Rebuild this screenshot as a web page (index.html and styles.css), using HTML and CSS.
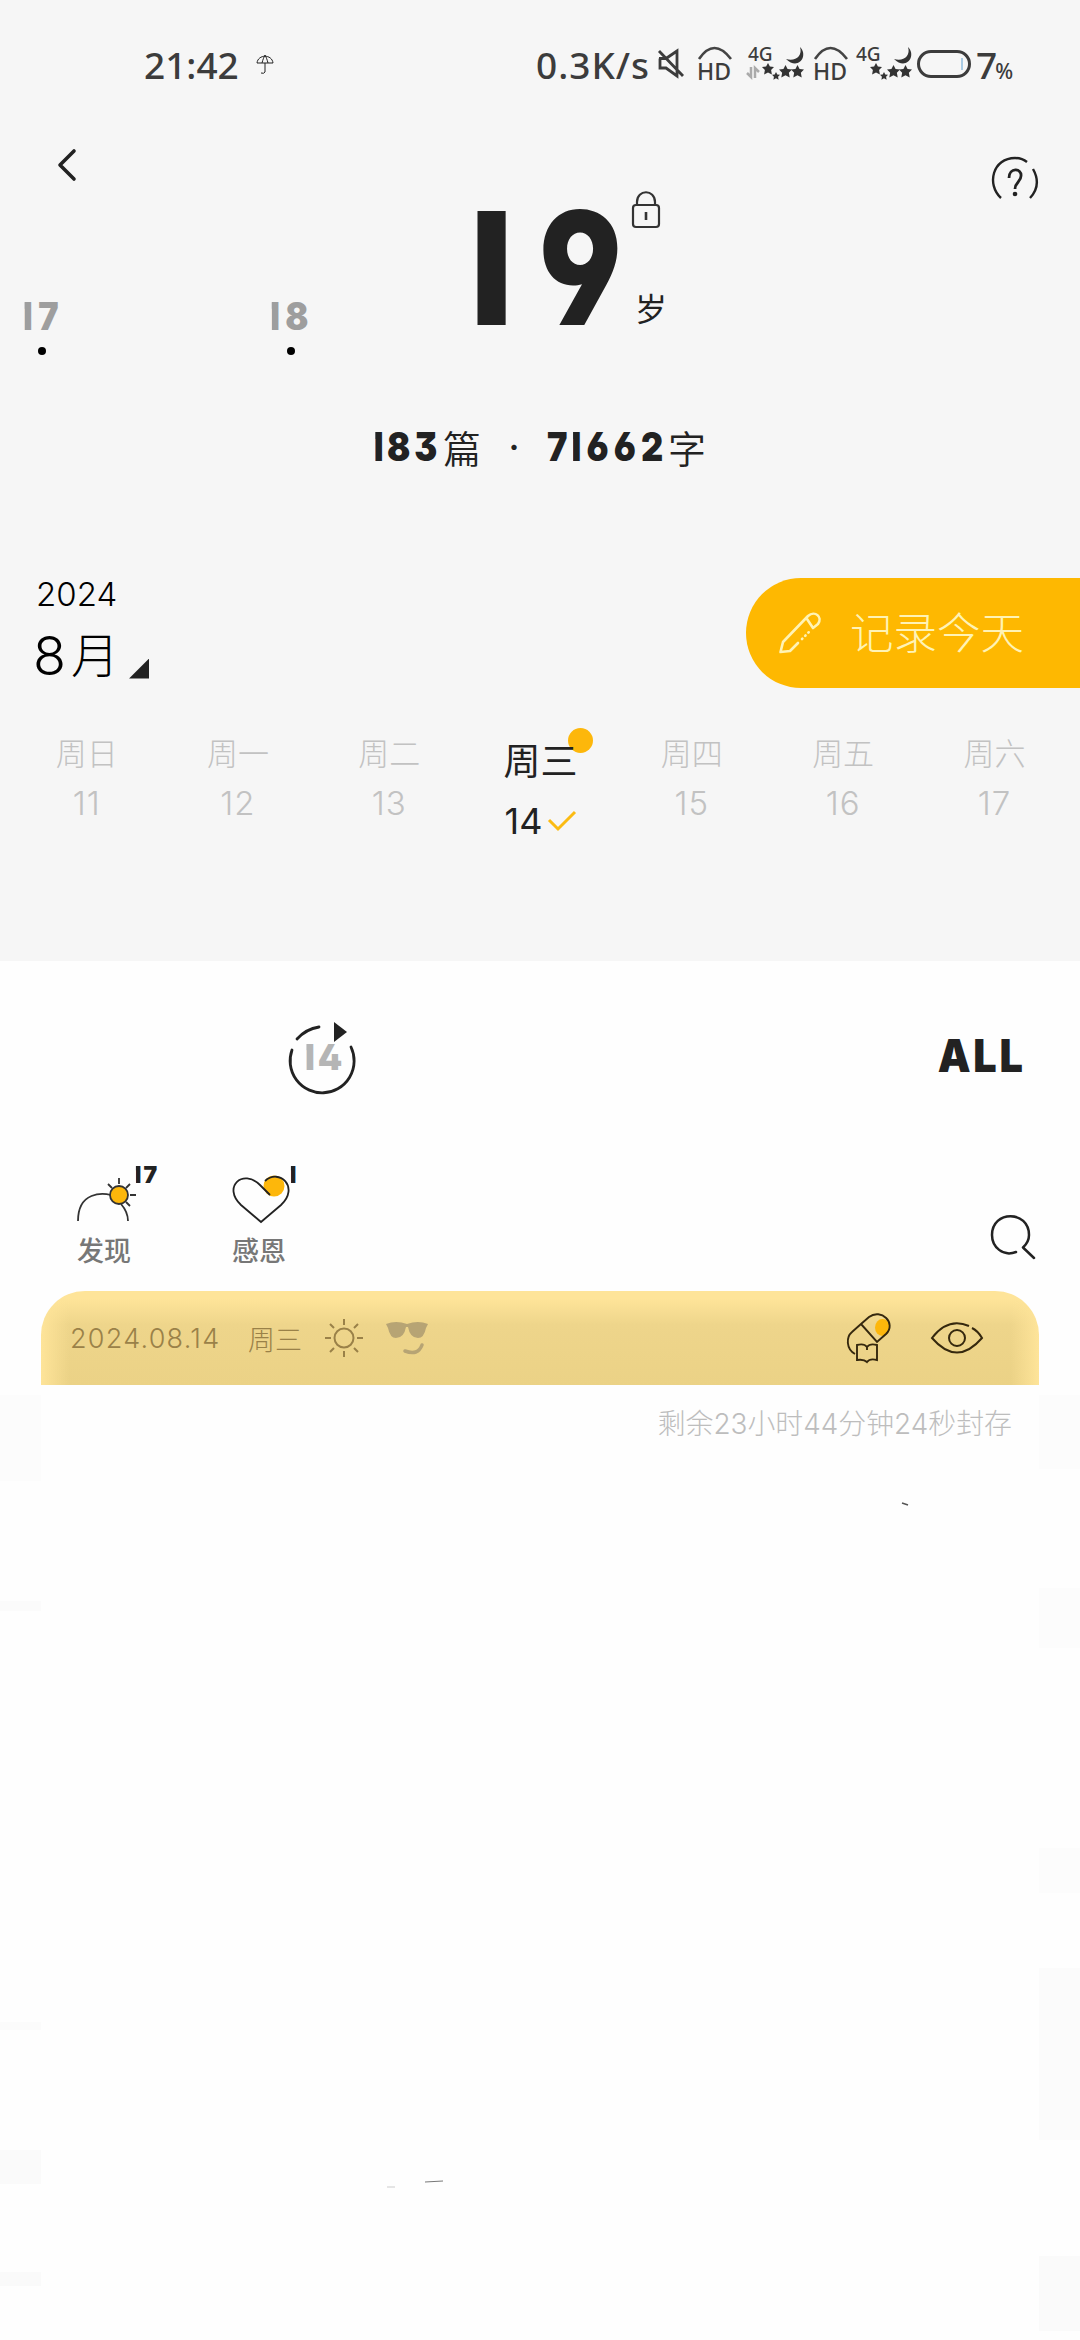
FILE: index.html
```html
<!DOCTYPE html>
<html lang="zh-CN">
<head>
<meta charset="utf-8">
<title>日记</title>
<link rel="stylesheet" href="styles.css">
</head>
<body>
<svg class="defs" width="0" height="0">
  <symbol id="hd" viewBox="0 0 36 36"><path d="M2 13Q17-9 34 13" fill="none" stroke="#444" stroke-width="2.6"/></symbol>
  <symbol id="star" viewBox="0 0 12 12"><path d="M6 0l1.900 3.600 4.100.5-2.900 3 .8 4.400L6 9.400l-3.900 2.100.8-4.400L0 4.100l4.100-.5z" fill="#333"/></symbol>
  <symbol id="signal" viewBox="0 0 60 36">
    <path d="M51 1C60 10 49 25 37 13C46 16 54 10 51 1Z" fill="#333"/>
    <use href="#star" x="13" y="17" width="12" height="12"/><use href="#star" x="23" y="26" width="8" height="8"/>
    <use href="#star" x="30" y="19" width="13" height="13"/><use href="#star" x="42" y="19" width="13" height="13"/>
  </symbol>
</svg>
<div class="screen">
  <section class="top">
    <header class="status">
      <span class="clock">21:42</span>
      <svg class="umbrella" viewBox="0 0 18 20" fill="none" stroke="#222" stroke-width="1"><path d="M1 9C2 0 16 0 17 9ZM6 9C7 5 8 3 9 1C10 3 11 5 12 9M9 9v9q-1 2-4 1"/></svg>
      <span class="speed">0.3K/s</span>
      <svg class="mute" viewBox="0 0 26 30" fill="none" stroke="#3c3c3c" stroke-width="2.800"><path d="M1 9.500H8L19 2V27L8 19H2V9.500M1 2L25 27"/></svg>
      <span class="hd"><svg viewBox="0 0 36 36"><use href="#hd"/></svg><b>HD</b></span>
      <span class="sig sig-data"><b>4G</b><svg viewBox="0 0 60 36"><use href="#signal"/><path d="M-2 27l4 4V21M6 32V22l4 4" fill="none" stroke="#aaa" stroke-width="2.500"/></svg></span>
      <span class="hd hd-two"><svg viewBox="0 0 36 36"><use href="#hd"/></svg><b>HD</b></span>
      <span class="sig sig-two"><b>4G</b><svg viewBox="0 0 60 36"><use href="#signal"/></svg></span>
      <span class="battery"><i></i></span>
      <span class="percent">7<small>%</small></span>
    </header>

    <nav class="nav">
      <svg class="back" viewBox="0 0 20 34" fill="none" stroke="#222" stroke-width="3.600" stroke-linecap="round" stroke-linejoin="round"><path d="M17 3L3 17L17 31"/></svg>
      <svg class="help" viewBox="0 0 48 44" fill="none" stroke="#222" stroke-width="2.400"><path d="M10 42C-5 28 2 2 24 2Q31 2 36 6M42 13Q51 29 39 42"/><path d="M18 22C18 11 31 12 30 20C30 26 24 26 24 33" stroke-width="2.800"/><circle cx="24" cy="38" r="2.300" fill="#222" stroke="none"/></svg>
    </nav>

    <div class="ages">
      <div class="age age-a"><span class="num"><i class="one">1</i>7</span><em></em></div>
      <div class="age age-b"><span class="num"><i class="one">1</i>8</span><em></em></div>
      <div class="current"><span class="num"><i class="one">1</i><i class="slim">9</i></span></div>
      <div class="unit">
        <svg viewBox="0 0 30 38" fill="none" stroke="#333" stroke-width="2.200"><rect x="2" y="14" width="26" height="22" rx="3"/><path d="M6 14V11C6-2 24-2 24 11V14"/><path d="M15 21v8" stroke-width="2.600"/></svg>
        <span>岁</span>
      </div>
    </div>

    <div class="totals"><span class="num n1"><i class="one">1</i>83</span><span class="cjk">篇</span><span class="sep">·</span><span class="num n2">7<i class="one">1</i>662</span><span class="cjk">字</span></div>

    <div class="month-row">
      <div class="month"><div class="year">2024</div><div class="mon">8<span>月</span><i></i></div></div>
      <div class="write">
        <svg viewBox="0 0 42 42" fill="none" stroke="#fff3b5" stroke-width="2.600" stroke-linejoin="round" stroke-linecap="round"><path d="M19 31L11 39L1.500 40L4 30L29 4C36-2 44 5 39 12L34 16L28 7"/><path d="M23 27l9-9" stroke-dasharray=".5 4"/></svg>
        <span>记录今天</span>
      </div>
    </div>

    <div class="week">
      <div class="day"><span>周日</span><b>11</b></div>
      <div class="day"><span>周一</span><b>12</b></div>
      <div class="day"><span>周二</span><b>13</b></div>
      <div class="day today"><i class="dot"></i><span>周三</span><b>14<svg viewBox="0 0 28 22" fill="none" stroke="#fbbb12" stroke-width="3"><path d="M1 10L10 19L27 2"/></svg></b></div>
      <div class="day"><span>周四</span><b>15</b></div>
      <div class="day"><span>周五</span><b>16</b></div>
      <div class="day"><span>周六</span><b>17</b></div>
    </div>
  </section>

  <section class="filters">
    <div class="replay">
      <svg viewBox="0 0 68 72" fill="none" stroke="#222" stroke-width="2.800" stroke-linecap="round"><path d="M9 17Q18 7 31 5M4 28A32 32 0 1 0 63 25"/><path d="M46 0V20L59 10Z" fill="#222" stroke="none"/></svg>
      <span class="num"><i class="one">1</i>4</span>
    </div>
    <div class="all">ALL</div>
  </section>

  <section class="tools">
    <div class="tool">
      <svg viewBox="0 0 62 48" fill="none" stroke="#333" stroke-width="1.800"><path d="M2 44C2 14 27 16 35 18M45 27Q52 35 52 44"/><circle cx="43" cy="18" r="9" fill="#fdb70b"/><path d="M43 1v6M32 7l4 4M54 7l-4 4M54 18h6M50 25l4 4"/></svg>
      <span class="count num"><i class="one">1</i>7</span><span class="label">发现</span>
    </div>
    <div class="tool">
      <svg viewBox="-2 0 62 48" fill="none" stroke="#222" stroke-width="1.800"><circle cx="41" cy="9" r="10.500" fill="#fdb70b" stroke="none"/><path d="M37 18L27 8C10-9-11 10 8 28L28 45L48 28C67 10 46-9 32 4"/></svg>
      <span class="count num"><i class="one">1</i></span><span class="label">感恩</span>
    </div>
    <svg class="search" viewBox="0 0 46 46" fill="none" stroke="#222" stroke-width="2.500" stroke-linecap="round" stroke-linejoin="round"><path d="M26 38C13 43 2 33 2 21C2-4 39-4 39 21Q39 28 33 33.500L44 44"/></svg>
  </section>

  <main class="feed">
    <div class="gutter gutter-left"></div>
    <article class="card">
      <header class="card-head">
        <span class="date">2024.08.14</span><span class="wd">周三</span>
        <svg class="sun" viewBox="0 0 38 38" fill="none" stroke="#9a8148" stroke-width="2"><circle cx="19" cy="19" r="9.500"/><path d="M19 0v6M19 32v6M0 19h6M32 19h6M5 5l4 4M29 29l4 4M33 5l-4 4M5 33l4-4"/></svg>
        <svg class="cool" viewBox="0 0 42 34"><path d="M0 3Q10-1 21 3Q32-1 42 3L40 7Q38 17 32 17Q24 17 22 6H20Q18 17 10 17Q4 17 2 7Z" fill="#b7a474"/><path d="M19 30Q32 35 36 24" fill="none" stroke="#b7a474" stroke-width="3.500" stroke-linecap="round"/></svg>
        <svg class="pill" viewBox="0 0 44 50" fill="none" stroke="#35280e" stroke-width="1.900"><ellipse cx="35.500" cy="14.500" rx="7.500" ry="8.500" fill="#fdb70b" stroke="none"/><path d="M8 41C-1 36-1 24 5 19L14 11L22 4C34-5 50 10 39 21L30 29L14 11M10 32Q17 30 20 34Q23 30 30 32V47Q23 45 20 49Q17 46 10 47ZM20 33v4"/></svg>
        <svg class="eye" viewBox="0 0 52 32" fill="none" stroke="#35280e" stroke-width="2"><path d="M38 4Q17-5 1 16Q26 45 51 16Q47 9 41 6"/><circle cx="26" cy="16" r="8"/></svg>
      </header>
      <div class="seal">剩余23小时44分钟24秒封存</div>
      <svg class="strokes" viewBox="0 0 600 800" fill="none"><path d="M479 35l6 2" stroke="#555" stroke-width="1.500"/><path d="M2 714l18-1" stroke="#777" stroke-width="1"/><path d="M-36 719h8" stroke="#ccc" stroke-width="1"/></svg>
    </article>
    <div class="gutter gutter-right"></div>
  </main>
</div>
</body>
</html>
```
FILE: styles.css
```css
* { box-sizing: border-box; }
body { margin: 0; background: #fefefe; font-family: Inter, "Noto Sans CJK SC", sans-serif; color: #222; }
svg { display: block; overflow: visible; flex: none; }
.defs { display: none; }
i, em { font-style: normal; }
.screen { width: 1080px; height: 2340px; overflow: hidden; background: #fefefe; }
.top { height: 961px; background: #f6f6f6; overflow: hidden; }
.num { font-family: Inter, sans-serif; font-weight: 900; font-feature-settings: "ss01", "cv03", "cv04"; white-space: nowrap; }
/* the numeral one is shown as its plain stem */
.one { display: inline-block; clip-path: inset(0 0 0 47%); letter-spacing: 0; }
.slim { display: inline-block; transform: scaleX(.82); }

.status { display: flex; height: 128px; align-items: center; padding-left: 144px; color: #3c3c3c; font-family: "Noto Sans", sans-serif; font-weight: 500; white-space: nowrap; }
.clock { width: 112px; font-size: 37px; letter-spacing: 0; }
.umbrella { width: 18px; height: 20px; }
.speed { width: 122px; margin-left: 262px; font-size: 37px; letter-spacing: 1px; }
.mute { width: 26px; height: 30px; }
.hd { position: relative; width: 36px; height: 36px; margin-left: 13px; }
.hd svg { width: 36px; height: 36px; }
.hd b { position: absolute; left: 0; top: 12px; font: 500 23px/26px "Noto Sans", sans-serif; }
.sig { position: relative; width: 60px; height: 36px; }
.sig svg { width: 60px; height: 36px; margin-left: 4px; }
.sig b { position: absolute; left: 3px; top: -3px; font: 500 19px/22px "Noto Sans", sans-serif; }
.sig-data { margin-left: 12px; }
.hd-two { margin-left: 8px; }
.sig-two { margin-left: 4px; }
.battery { display: flex; justify-content: flex-end; align-items: center; width: 54px; height: 28px; margin-left: 4px; padding-right: 5px; border: 3px solid #3c3c3c; border-radius: 14px; }
.battery i { width: 2px; height: 12px; background: #a9cbe4; }
.percent { font-size: 37px; margin-left: 5px; }
.percent small { margin-left: -2px; font-size: 21px; }

.nav { display: flex; justify-content: space-between; height: 72px; padding: 20px 41px 0 57px; }
.back { width: 20px; height: 34px; }
.help { width: 48px; height: 44px; margin-top: 8px; }

.ages { display: flex; height: 200px; }
.age { display: flex; flex-direction: column; align-items: center; color: #9e9e9e; font-size: 38px; line-height: 40px; padding-top: 96px; }
.age .num { margin-left: -9px; transform: scaleX(.9); }
.age .one { margin-right: 6px; }
.age-a { width: 84px; }
.age-b { width: 164px; margin-left: 125px; }
.age em { width: 8px; height: 8px; margin-top: 11px; border-radius: 50%; background: #000; }
.current { width: 157px; margin-left: 88px; font-size: 157px; line-height: 136px; }
.current .one { margin-left: -19px; margin-right: 17px; clip-path: inset(0 0 0 50%); }
.unit { margin-left: 13px; }
.unit svg { width: 30px; height: 38px; margin-top: -9px; }
.unit span { display: block; margin: 60px 0 0 4px; font-size: 32px; line-height: 42px; }

.totals { display: flex; align-items: center; height: 92px; padding-left: 375px; font-size: 40px; }
.totals .cjk { width: 38px; font-size: 38px; font-weight: 350; }
.totals .num { letter-spacing: 4.500px; transform: scaleX(.86); transform-origin: left; }
.totals .one { margin-right: 4px; }
.totals .n1 { width: 75px; margin-left: -7px; }
.totals .n2 { width: 121px; letter-spacing: 6px; }
.totals .n2 .one { margin-left: -8px; margin-right: 6px; }
.sep { width: 66px; text-align: center; }

.month-row { display: flex; justify-content: space-between; height: 236px; padding-top: 86px; }
.month { padding-left: 33px; font-weight: 300; color: #000; }
.year { padding-left: 3px; font-size: 33px; line-height: 32px; }
.mon { display: flex; align-items: center; font-size: 54px; line-height: 64px; margin-top: 14px; }
.mon span { margin-left: 5px; font-size: 48px; }
.mon i { width: 20px; height: 20px; margin: 25px 0 0 10px; background: #222; clip-path: polygon(100% 0, 100% 100%, 0 100%); }
.write { display: flex; align-items: center; width: 334px; height: 110px; padding-left: 33px; border-radius: 55px 0 0 55px; background: #feb801; color: #fff3b5; font-size: 43.500px; line-height: 60px; font-weight: 300; }
.write svg { width: 42px; height: 42px; margin-right: 29px; }
.write span { padding-bottom: 1px; }

.week { display: grid; grid-template-columns: repeat(7, 151.300px); padding-left: 11px; }
.day { position: relative; display: flex; flex-direction: column; align-items: center; color: #c2c2c2; font-weight: 300; }
.day span { font-size: 31px; line-height: 44px; margin-top: 4px; }
.day b { display: flex; align-items: center; font-size: 33px; line-height: 40px; margin-top: 7px; font-weight: 300; letter-spacing: 1px; }
.today { color: #222; }
.today span { position: relative; margin-top: 12px; font-size: 37px; font-weight: 400; }
.today b { margin-top: 17px; font-size: 36px; font-weight: 400; letter-spacing: 0; }
.today svg { width: 28px; height: 22px; margin-left: 6px; }
.dot { position: absolute; left: 103px; top: 0; width: 25px; height: 25px; border-radius: 50%; background: #fdb70b; }

.filters { display: flex; justify-content: space-between; height: 197px; padding: 61px 57px 0 288px; }
.replay { position: relative; width: 68px; height: 72px; }
.replay svg { width: 68px; height: 72px; }
.replay span { position: absolute; left: 11px; top: 15px; font-size: 35px; line-height: 40px; color: #b5b5b5; }
.replay .one { margin-right: 3px; }
.all { font: 900 45px/68px Inter, sans-serif; letter-spacing: 3px; margin-right: -3px; transform: scaleX(.92); transform-origin: right; }

.tools { display: flex; height: 133px; padding-left: 76px; }
.tool { position: relative; width: 155px; padding-top: 19px; }
.tool svg { width: 62px; height: 48px; }
.count { position: absolute; left: 55px; top: 5px; font-size: 23px; line-height: 24px; }
.count .one { margin-right: 2px; }
.label { display: block; margin: 8px 0 0 1px; font-size: 27px; line-height: 38px; color: #777; font-weight: 500; }
.search { width: 46px; height: 46px; margin: 56px 0 0 604px; }

.feed { display: grid; grid-template-columns: 41px 998px 41px; height: 1049px; }
.card-head { display: flex; align-items: center; height: 94px; padding-left: 29px; border-radius: 44px 44px 0 0; background: linear-gradient(90deg, #fee499, rgba(254, 228, 153, 0) 28px, rgba(254, 228, 153, 0) 970px, #fee499), linear-gradient(#fee499 8px, #eed58b 34px, #ebd286); color: #9a8148; font-size: 27px; font-weight: 300; }
.date { width: 178px; letter-spacing: 1.250px; }
.wd { width: 77px; }
.sun { width: 38px; height: 38px; }
.cool { width: 42px; height: 34px; margin-left: 23px; }
.pill { width: 44px; height: 50px; margin-left: 419px; }
.eye { width: 52px; height: 32px; margin-left: 40px; }
.seal { padding: 17px 27px 0 0; text-align: right; font-size: 27.900px; line-height: 44px; font-weight: 300; color: #bdbdbd; }
.strokes { width: 600px; height: 800px; margin: 22px 0 0 382px; }
.gutter-left { background: linear-gradient(#fefefe 104px, #fcfcfc 104px 190px, #fefefe 190px 310px, #fbfbfb 310px 320px, #fefefe 320px 731px, #fbfbfb 731px 739px, #fefefe 739px 859px, #fafafa 859px 893px, #fefefe 893px 981px, #fafafa 981px 995px, #fefefe 995px); }
.gutter-right { background: linear-gradient(#fefefe 104px, #fcfcfc 104px 178px, #fefefe 178px 297px, #fcfcfc 297px 357px, #fefefe 357px 557px, #fcfcfc 557px 602px, #fefefe 602px 677px, #fbfbfb 677px 849px, #fefefe 849px 965px, #fafafa 965px 1040px, #fefefe 1040px); }
```
